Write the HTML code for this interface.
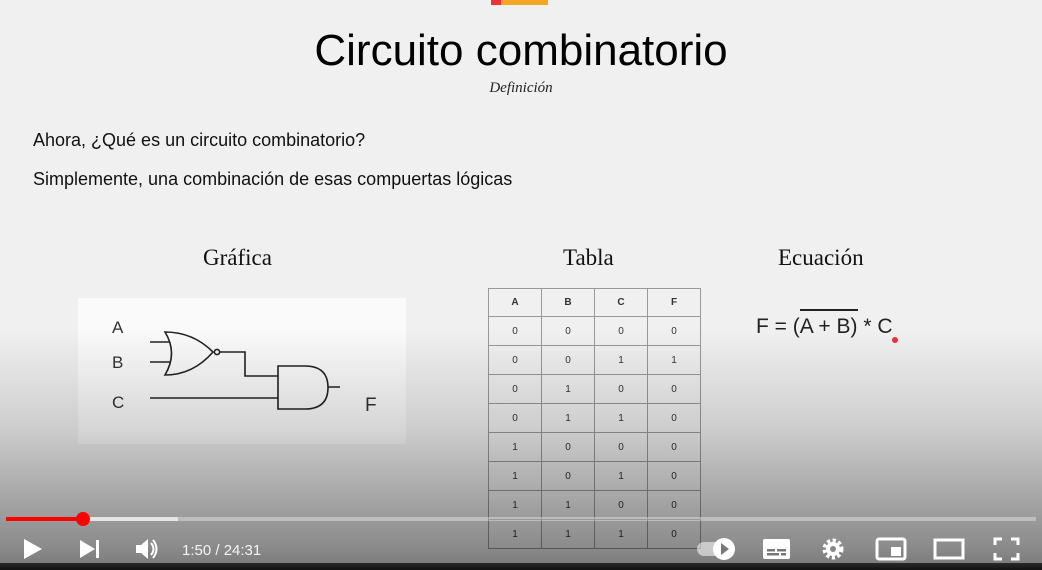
<!DOCTYPE html>
<html><head><meta charset="utf-8"><style>
*{margin:0;padding:0;box-sizing:border-box}
body{width:1042px;height:570px;overflow:hidden;position:relative;background:#f0f0f0;font-family:"Liberation Sans",sans-serif;color:#111}
.a{position:absolute}
.serif{font-family:"Liberation Serif",serif}
table{border-collapse:collapse;position:absolute;left:488px;top:288px}
td{width:53px;height:29px;border:1px solid #999;text-align:center;font-size:10px;color:#333}
tr:first-child td{height:28px;font-weight:bold}
#shade{position:absolute;left:0;top:330px;width:1042px;height:240px;background:linear-gradient(rgba(0,0,0,0),rgba(0,0,0,0.14) 40%,rgba(0,0,0,0.42) 90%,rgba(0,0,0,0.5))}
svg{position:absolute}
.w{fill:#fff}
</style></head><body>
<div class="a" style="left:491px;top:0;width:10px;height:5px;background:#e33"></div>
<div class="a" style="left:501px;top:0;width:47px;height:5px;background:#f5a623"></div>
<div class="a" style="left:0;top:26px;width:1042px;text-align:center;font-size:44px;color:#000">Circuito combinatorio</div>
<div class="a serif" style="left:0;top:80px;width:1042px;text-align:center;font-size:15px;font-style:italic;color:#222">Definición</div>
<div class="a" style="left:33px;top:130px;font-size:18px">Ahora, ¿Qué es un circuito combinatorio?</div>
<div class="a" style="left:33px;top:169px;font-size:18px">Simplemente, una combinación de esas compuertas lógicas</div>
<div class="a serif" style="left:203px;top:245px;font-size:23px">Gráfica</div>
<div class="a serif" style="left:563px;top:245px;font-size:23px">Tabla</div>
<div class="a serif" style="left:778px;top:245px;font-size:23px">Ecuación</div>
<div class="a" style="left:78px;top:298px;width:328px;height:146px;background:#fafafa"></div>
<svg style="left:78px;top:298px" width="328" height="146" fill="none" stroke="#222" stroke-width="1.6">
<path d="M87 34 Q115 34 135 54 Q115 77 87 77 Q100 55 87 34Z"/>
<path d="M72 44 H92 M72 64 H92"/>
<circle cx="139" cy="54" r="2.6"/>
<path d="M142 54 H167 V78 H200"/>
<path d="M200 68 V111 H227 Q250 111 250 89.5 Q250 68 227 68 Z"/>
<path d="M72 100 H200 M250 89 H262"/>
<text x="34" y="35" fill="#333" stroke="none" font-size="17" font-family="Liberation Sans">A</text>
<text x="34" y="70" fill="#333" stroke="none" font-size="17" font-family="Liberation Sans">B</text>
<text x="34" y="110" fill="#333" stroke="none" font-size="17" font-family="Liberation Sans">C</text>
<text x="287" y="113" fill="#333" stroke="none" font-size="19" font-family="Liberation Sans">F</text>
</svg>
<table>
<tr><td>A</td><td>B</td><td>C</td><td>F</td></tr>
<tr><td>0</td><td>0</td><td>0</td><td>0</td></tr>
<tr><td>0</td><td>0</td><td>1</td><td>1</td></tr>
<tr><td>0</td><td>1</td><td>0</td><td>0</td></tr>
<tr><td>0</td><td>1</td><td>1</td><td>0</td></tr>
<tr><td>1</td><td>0</td><td>0</td><td>0</td></tr>
<tr><td>1</td><td>0</td><td>1</td><td>0</td></tr>
<tr><td>1</td><td>1</td><td>0</td><td>0</td></tr>
<tr><td>1</td><td>1</td><td>1</td><td>0</td></tr>
</table>
<div class="a" style="left:756px;top:315px;font-size:21px;color:#222">F = (A + B) * C</div>
<div class="a" style="left:800px;top:309px;width:58px;height:2px;background:#222"></div>
<div class="a" style="left:892px;top:337px;width:6px;height:6px;border-radius:3px;background:#e33"></div>
<div id="shade"></div>
<div class="a" style="left:0;top:563px;width:1042px;height:7px;background:linear-gradient(#2a2a2a,#111)"></div>
<div class="a" style="left:6px;top:517px;width:1030px;height:4px;background:rgba(255,255,255,0.35)"></div>
<div class="a" style="left:6px;top:517px;width:172px;height:4px;background:rgba(255,255,255,0.6)"></div>
<div class="a" style="left:6px;top:517px;width:77px;height:4px;background:#f00"></div>
<div class="a" style="left:76px;top:512px;width:14px;height:14px;border-radius:7px;background:#f00"></div>
<svg style="left:0;top:530px" width="1042" height="36">
<path class="w" d="M24 9 L42 19 L24 29Z"/>
<path class="w" d="M80 10 L95 19 L80 28Z"/><rect class="w" x="96" y="10" width="3" height="18"/>
<path class="w" d="M136 15 H141 L148 9 V29 L141 23 H136Z"/>
<path d="M151 13 Q156 19 151 25 M153 10 Q160 19 153 28" stroke="#fff" stroke-width="2" fill="none"/>
<text x="182" y="25" fill="#f4f4f4" font-size="15" font-family="Liberation Sans">1:50 / 24:31</text>
<rect x="697" y="12" width="24" height="14" rx="7" fill="rgba(255,255,255,0.55)"/>
<circle cx="724" cy="19" r="11" fill="#fff"/><path d="M721 13 L729 19 L721 25Z" fill="#777"/>
<rect class="w" x="763" y="9" width="27" height="20" rx="2"/>
<rect x="767" y="19" width="8" height="2.5" fill="#777"/><rect x="777" y="19" width="9" height="2.5" fill="#777"/>
<rect x="767" y="23" width="12" height="2.5" fill="#777"/><rect x="781" y="23" width="5" height="2.5" fill="#777"/>
<circle cx="833" cy="19" r="8" fill="none" stroke="#fff" stroke-width="5" stroke-dasharray="3 2.3"/>
<circle cx="833" cy="19" r="7" fill="#fff"/><circle cx="833" cy="19" r="3" fill="#888"/>
<rect x="877" y="9" width="28" height="20" rx="2" fill="none" stroke="#fff" stroke-width="3"/>
<rect class="w" x="891" y="17" width="10" height="9"/>
<rect x="935" y="10" width="28" height="18" fill="none" stroke="#fff" stroke-width="3"/>
<path d="M995 15 V9 H1002 M1011 9 H1018 V15 M1018 23 V29 H1011 M1002 29 H995 V23" stroke="#fff" stroke-width="3" fill="none"/>
</svg>
</body></html>
